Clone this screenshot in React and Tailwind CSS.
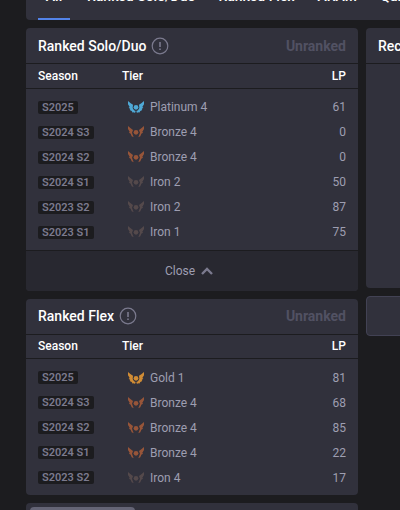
import { useState } from 'react'

const tabs = ['All', 'Ranked Solo/Duo', 'Ranked Flex', 'ARAM', 'Quick Play']

const tierColors = {
  Platinum: 'text-[#4fa9d6]',
  Gold: 'text-[#d08c35]',
  Bronze: 'text-[#975539]',
  Iron: 'text-[#54494b]',
}

const soloSeasons = [
  { season: 'S2025', tier: 'Platinum', division: 4, lp: 61 },
  { season: 'S2024 S3', tier: 'Bronze', division: 4, lp: 0 },
  { season: 'S2024 S2', tier: 'Bronze', division: 4, lp: 0 },
  { season: 'S2024 S1', tier: 'Iron', division: 2, lp: 50 },
  { season: 'S2023 S2', tier: 'Iron', division: 2, lp: 87 },
  { season: 'S2023 S1', tier: 'Iron', division: 1, lp: 75 },
]

const flexSeasons = [
  { season: 'S2025', tier: 'Gold', division: 1, lp: 81 },
  { season: 'S2024 S3', tier: 'Bronze', division: 4, lp: 68 },
  { season: 'S2024 S2', tier: 'Bronze', division: 4, lp: 85 },
  { season: 'S2024 S1', tier: 'Bronze', division: 4, lp: 22 },
  { season: 'S2023 S2', tier: 'Iron', division: 4, lp: 17 },
]

function TierIcon({ tier }) {
  const winged = tier === 'Platinum' || tier === 'Gold'

  return (
    <svg viewBox="0 0 48 36" className={`h-3 w-4 shrink-0 ${tierColors[tier]}`} fill="currentColor" aria-hidden="true">
      <circle cx="24" cy="19" r="7" />
      {winged ? (
        <>
          <path d="M0 0 L8 7 L15 11 L14 21 L18 28 L23 30 L21 36 L17 33 L15 36 L11 30 L5 27 L7 24 L2 20 L5 18 L0 10 Z" />
          <path d="M48 0 L40 7 L33 11 L34 21 L30 28 L25 30 L27 36 L31 33 L33 36 L37 30 L43 27 L41 24 L46 20 L43 18 L48 10 Z" />
        </>
      ) : (
        <>
          <path d="M0 0 L8 7 L15 12 L12 20 L17 34 L11 31 L8 23 L3 20 L5 17 L0 9 Z" />
          <path d="M48 0 L40 7 L33 12 L36 20 L31 34 L37 31 L40 23 L45 20 L43 17 L48 9 Z" />
        </>
      )}
    </svg>
  )
}

function InfoIcon() {
  return (
    <svg viewBox="0 0 18 18" className="size-[18px]" fill="none" stroke="currentColor" aria-hidden="true">
      <circle cx="9" cy="9" r="7.8" strokeWidth="1.2" />
      <path d="M9 5v5M9 11.5v1.5" strokeWidth="1.6" />
    </svg>
  )
}

function SeasonTable({ rows }) {
  return (
    <table className="w-full table-fixed border-collapse text-xs text-[#9e9eb1]">
      <thead>
        <tr className="h-6 border-b border-[#1c1c1f] text-left text-white">
          <th className="w-24 pl-3 font-medium">Season</th>
          <th className="font-medium">Tier</th>
          <th className="w-16 pr-3 text-right font-medium">LP</th>
        </tr>
      </thead>
      <tbody className="before:block before:h-1.5 after:block after:h-[5px]">
        {rows.map((row) => (
          <tr key={row.season} className="h-[25px]">
            <td className="pl-3">
              <span className="block h-[13px] w-fit rounded-xs bg-[#1c1c1f] px-1 text-[11px] leading-[13px] font-semibold text-[#7b7a8e]">
                {row.season}
              </span>
            </td>
            <td className="pl-1.5">
              <div className="flex items-center gap-1.5">
                <TierIcon tier={row.tier} />
                {row.tier} {row.division}
              </div>
            </td>
            <td className="pr-3 text-right">{row.lp}</td>
          </tr>
        ))}
      </tbody>
    </table>
  )
}

function RankedCard({ title, rows, collapsible }) {
  const [open, setOpen] = useState(true)

  return (
    <section className="overflow-hidden rounded bg-[#31313c]">
      <div className="flex h-9 items-center gap-[5px] border-b border-[#1c1c1f] px-3">
        <h2 className="text-sm font-medium text-white">{title}</h2>
        <button type="button" aria-label={`About ${title}`} className="text-[#7b7a8e]">
          <InfoIcon />
        </button>
        <span className="ml-auto text-sm font-bold text-[#515163]">Unranked</span>
      </div>
      <SeasonTable rows={open ? rows : rows.slice(0, 1)} />
      {collapsible && (
        <button
          type="button"
          onClick={() => setOpen(!open)}
          className="flex h-[41px] w-full items-center justify-center border-t border-[#1c1c1f] bg-[#282830] text-xs text-[#9e9eb1]"
        >
          {open ? 'Close' : 'Open'}
          <svg viewBox="0 0 24 24" className={open ? 'size-6' : 'size-6 rotate-180'} fill="none" stroke="#7b7a8e" strokeWidth="2.4" aria-hidden="true">
            <path d="M7 15L12 10L17 15" />
          </svg>
        </button>
      )}
    </section>
  )
}

export default function App() {
  return (
    <div className="min-h-screen overflow-hidden bg-[#1c1c1f] pl-[26px] font-[Roboto,sans-serif]">
      <div className="flex min-w-[740px] flex-col gap-2">
        <nav className="flex h-5 items-end gap-[11px] overflow-hidden rounded-b bg-[#31313c] pl-3">
          {tabs.map((tab, i) => (
            <button
              key={tab}
              type="button"
              className={`h-10 min-w-8 shrink-0 border-b-2 px-1.5 pb-1.5 text-sm font-medium whitespace-nowrap text-white ${
                i === 0 ? 'border-[#5383e8]' : 'border-transparent'
              }`}
            >
              {tab}
            </button>
          ))}
        </nav>

        <div className="flex items-start gap-2">
          <aside className="flex w-[332px] shrink-0 flex-col gap-2">
            <RankedCard title="Ranked Solo/Duo" rows={soloSeasons} collapsible />
            <RankedCard title="Ranked Flex" rows={flexSeasons} />
            <div className="rounded bg-[#31313c] p-1">
              <div className="h-7 w-[105px] rounded bg-[#646475]" />
            </div>
          </aside>

          <main className="flex grow flex-col gap-2">
            <section className="rounded bg-[#31313c]">
              <div className="flex h-9 items-center border-b border-[#1c1c1f] px-3">
                <h2 className="text-sm font-medium text-white">Recent Games</h2>
              </div>
              <div className="h-56" />
            </section>
            <div className="h-10 rounded border border-[#424254] bg-[#31313c]" />
          </main>
        </div>
      </div>
    </div>
  )
}
